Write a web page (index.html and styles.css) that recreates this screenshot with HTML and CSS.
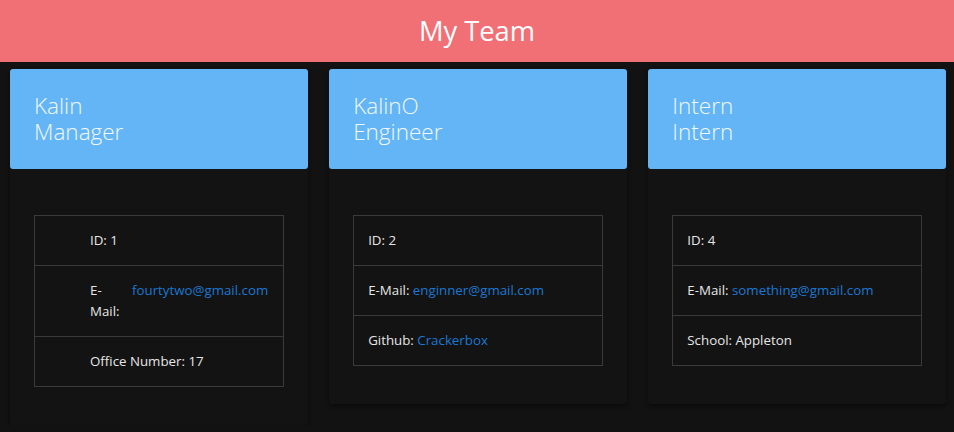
FILE: index.html
```html
<!DOCTYPE html>
<html lang="en">
<head>
<meta charset="utf-8">
<title>My Team</title>
<link rel="stylesheet" href="styles.css">
</head>
<body>
<header class="top">
  <h1 class="top-title">My Team</h1>
</header>
<main class="team">
  <section class="card">
    <div class="card-head">
      <h2 class="card-name">Kalin</h2>
      <h2 class="card-role">Manager</h2>
    </div>
    <div class="card-body">
      <ul class="info">
        <li class="info-item info-item--wide"><span class="info-label">ID: 1</span></li>
        <li class="info-item info-item--wide"><span class="info-label info-label--narrow">E-<wbr>Mail:</span><a class="info-link" href="#">fourtytwo@gmail.com</a></li>
        <li class="info-item info-item--wide"><span class="info-label">Office Number: 17</span></li>
      </ul>
    </div>
  </section>
  <section class="card">
    <div class="card-head">
      <h2 class="card-name">KalinO</h2>
      <h2 class="card-role">Engineer</h2>
    </div>
    <div class="card-body">
      <ul class="info">
        <li class="info-item">ID: 2</li>
        <li class="info-item">E-Mail: <a class="info-link" href="#">enginner@gmail.com</a></li>
        <li class="info-item">Github: <a class="info-link" href="#">Crackerbox</a></li>
      </ul>
    </div>
  </section>
  <section class="card">
    <div class="card-head">
      <h2 class="card-name">Intern</h2>
      <h2 class="card-role">Intern</h2>
    </div>
    <div class="card-body">
      <ul class="info">
        <li class="info-item">ID: 4</li>
        <li class="info-item">E-Mail: <a class="info-link" href="#">something@gmail.com</a></li>
        <li class="info-item">School: Appleton</li>
      </ul>
    </div>
  </section>
</main>
</body>
</html>
```
FILE: styles.css
```css
* { box-sizing: border-box; }
html, body { margin: 0; padding: 0; }
body {
  background: #121212;
  color: #e6e6e6;
  font-family: "Open Sans", "Noto Sans", sans-serif;
  font-size: 13.3px;
  line-height: 21px;
}
.top {
  background: #f07076;
  height: 62px;
  display: flex;
  align-items: center;
  justify-content: center;
}
.top-title {
  margin: 0;
  color: #ffffff;
  font-size: 27.3px;
  font-weight: 400;
  line-height: 36px;
}
.team {
  display: grid;
  grid-template-columns: repeat(3, 1fr);
  column-gap: 21.5px;
  align-items: start;
  padding: 7px 8px 0 10px;
}
.card {
  background: #131313;
  border-radius: 3px;
  box-shadow: 0 2px 4px rgba(0,0,0,0.45);
}
.card-head {
  background: #64b5f6;
  border-radius: 3px;
  height: 100px;
  padding: 24px 24px 0;
  color: #f2f8ff;
}
.card-name, .card-role {
  margin: 0;
  font-size: 22.5px;
  font-weight: 300;
  line-height: 26px;
}
.card-body {
  padding: 46px 24px 38px;
}
.info {
  list-style: none;
  margin: 0;
  padding: 0;
  border: 1px solid #3a3a3a;
}
.info-item {
  padding: 14px;
  border-top: 1px solid #3a3a3a;
}
.info-item:first-child { border-top: none; height: 49px; }
.info-item--wide {
  display: flex;
  padding-left: 55px;
}
.info-label { flex: 0 1 auto; }
.info-label--narrow {
  flex: 0 0 36px;
  margin-right: 6px;
}
.info-link {
  color: #1a78d2;
  text-decoration: none;
}
.info-item--wide .info-link { flex: 0 0 auto; }
```
